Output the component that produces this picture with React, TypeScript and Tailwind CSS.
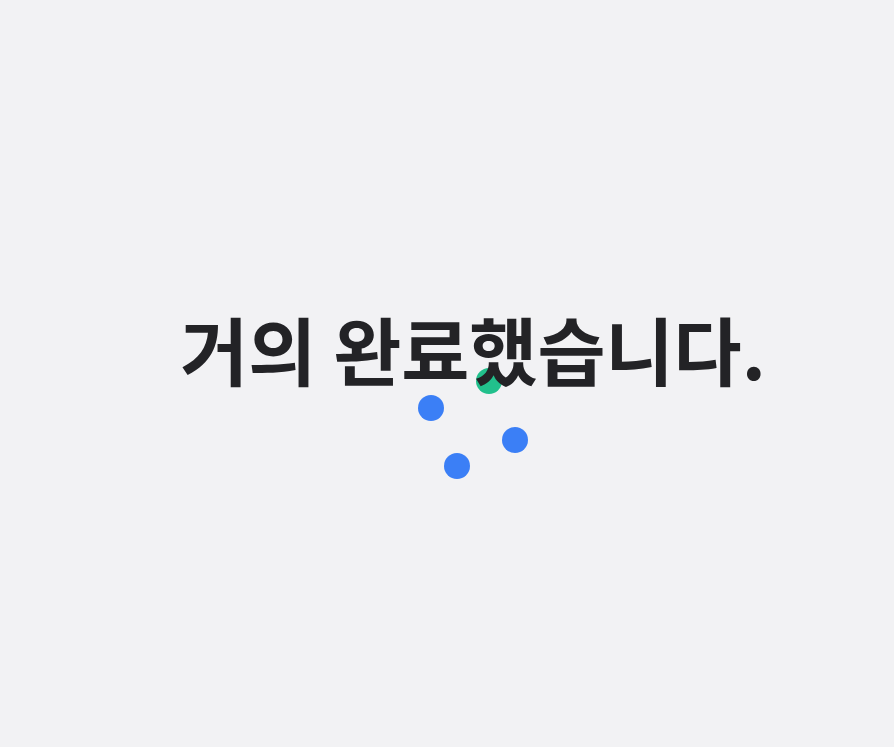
import React from 'react'

const DOTS = [
  { x: 16, y: -43, color: 'bg-[#22c08c]' },
  { x: -42, y: -16, color: 'bg-[#3b7ff6]' },
  { x: 42, y: 16, color: 'bg-[#3b7ff6]' },
  { x: -16, y: 42, color: 'bg-[#3b7ff6]' },
]

export default function App() {
  return (
    <div className="min-h-screen w-full bg-[#f2f2f4] flex items-start justify-center pl-[52px] pt-[311px]" style={{ fontFamily: '"Noto Sans CJK KR", "Noto Sans", sans-serif' }}>
      <div className="relative flex flex-col items-center">
        <div className="absolute left-1/2 top-[113px]">
          {DOTS.map((d, i) => (
            <span
              key={i}
              className={`absolute w-[26px] h-[26px] rounded-full ${d.color}`}
              style={{ left: d.x - 13, top: d.y - 13 }}
            />
          ))}
        </div>
        <h1 className="relative text-[74px] font-bold text-[#232326] leading-none tracking-normal whitespace-nowrap">
          거의 완료했습니다.
        </h1>
      </div>
    </div>
  )
}
